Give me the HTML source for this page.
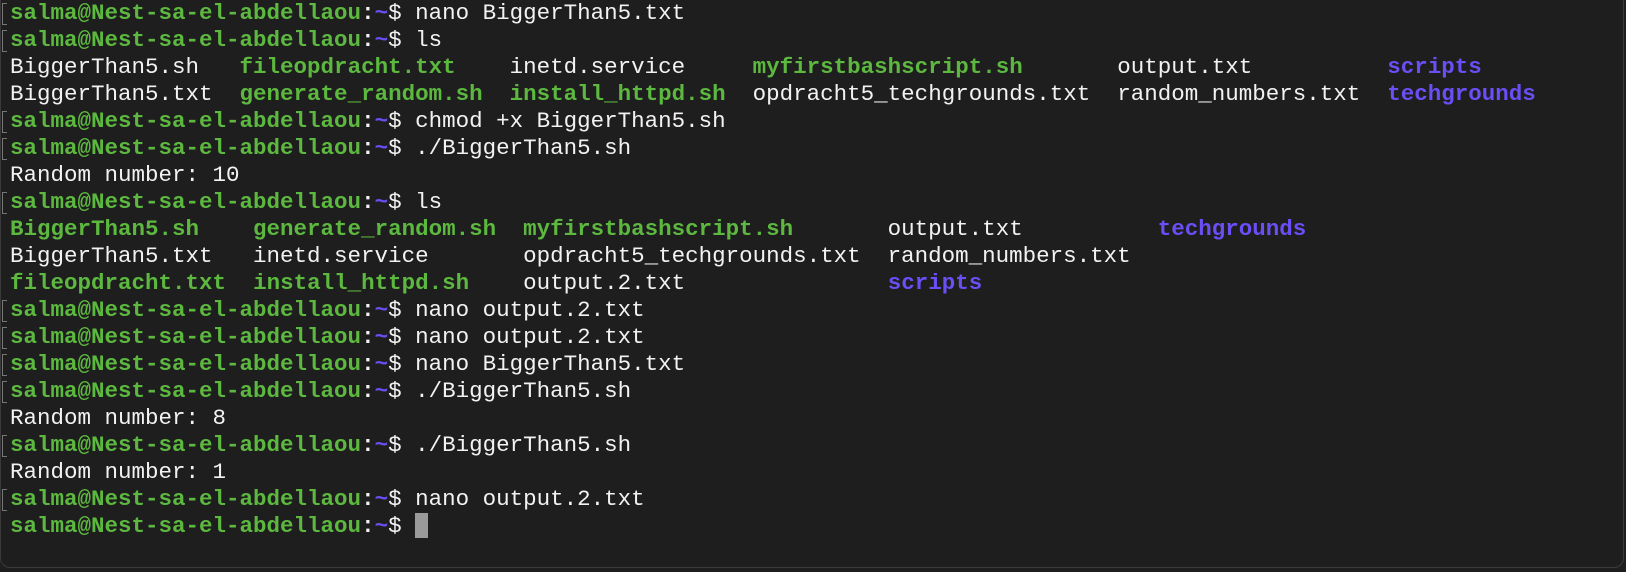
<!DOCTYPE html>
<html><head><style>
html,body{margin:0;padding:0;background:#1e1e1e;}
body{width:1626px;height:572px;overflow:hidden;position:relative;}
.frame{position:absolute;left:0;top:-10px;width:1624px;height:578px;border:1px solid #3a3a3a;border-radius:10px;box-sizing:border-box;}
pre{margin:0;position:absolute;left:10px;top:0;font-family:"Liberation Mono",monospace;font-size:22.5px;line-height:27px;color:#f2f2f2;}
.g{color:#5cb83f;font-weight:bold}
.p{color:#6b4ef5;font-weight:bold}
.t{color:#6b4ef5}
.w{color:#f2f2f2;font-weight:bold}
.m{position:absolute;left:2px;width:5px;height:22px;border:1px solid #777;border-right:none;box-sizing:border-box}
.cur{display:inline-block;width:13px;height:25px;background:#9a9a9a;vertical-align:-6px}
</style></head><body>
<div class="frame"></div>
<div class="m" style="top:3px"></div>
<div class="m" style="top:30px"></div>
<div class="m" style="top:111px"></div>
<div class="m" style="top:138px"></div>
<div class="m" style="top:192px"></div>
<div class="m" style="top:300px"></div>
<div class="m" style="top:327px"></div>
<div class="m" style="top:354px"></div>
<div class="m" style="top:381px"></div>
<div class="m" style="top:435px"></div>
<div class="m" style="top:489px"></div>
<pre><span class="g">salma@Nest-sa-el-abdellaou</span><span class="w">:</span><span class="p">~</span>$ nano BiggerThan5.txt
<span class="g">salma@Nest-sa-el-abdellaou</span><span class="w">:</span><span class="p">~</span>$ ls
BiggerThan5.sh   <span class="g">fileopdracht.txt</span>    inetd.service     <span class="g">myfirstbashscript.sh</span>       output.txt          <span class="p">scripts</span>
BiggerThan5.txt  <span class="g">generate_random.sh</span>  <span class="g">install_httpd.sh</span>  opdracht5_techgrounds.txt  random_numbers.txt  <span class="p">techgrounds</span>
<span class="g">salma@Nest-sa-el-abdellaou</span><span class="w">:</span><span class="p">~</span>$ chmod +x BiggerThan5.sh
<span class="g">salma@Nest-sa-el-abdellaou</span><span class="w">:</span><span class="p">~</span>$ ./BiggerThan5.sh
Random number: 10
<span class="g">salma@Nest-sa-el-abdellaou</span><span class="w">:</span><span class="p">~</span>$ ls
<span class="g">BiggerThan5.sh</span>    <span class="g">generate_random.sh</span>  <span class="g">myfirstbashscript.sh</span>       output.txt          <span class="p">techgrounds</span>
BiggerThan5.txt   inetd.service       opdracht5_techgrounds.txt  random_numbers.txt
<span class="g">fileopdracht.txt</span>  <span class="g">install_httpd.sh</span>    output.2.txt               <span class="p">scripts</span>
<span class="g">salma@Nest-sa-el-abdellaou</span><span class="w">:</span><span class="p">~</span>$ nano output.2.txt
<span class="g">salma@Nest-sa-el-abdellaou</span><span class="w">:</span><span class="p">~</span>$ nano output.2.txt
<span class="g">salma@Nest-sa-el-abdellaou</span><span class="w">:</span><span class="p">~</span>$ nano BiggerThan5.txt
<span class="g">salma@Nest-sa-el-abdellaou</span><span class="w">:</span><span class="p">~</span>$ ./BiggerThan5.sh
Random number: 8
<span class="g">salma@Nest-sa-el-abdellaou</span><span class="w">:</span><span class="p">~</span>$ ./BiggerThan5.sh
Random number: 1
<span class="g">salma@Nest-sa-el-abdellaou</span><span class="w">:</span><span class="p">~</span>$ nano output.2.txt
<span class="g">salma@Nest-sa-el-abdellaou</span><span class="w">:</span><span class="p">~</span>$ <span class="cur"></span></pre>
</body></html>
